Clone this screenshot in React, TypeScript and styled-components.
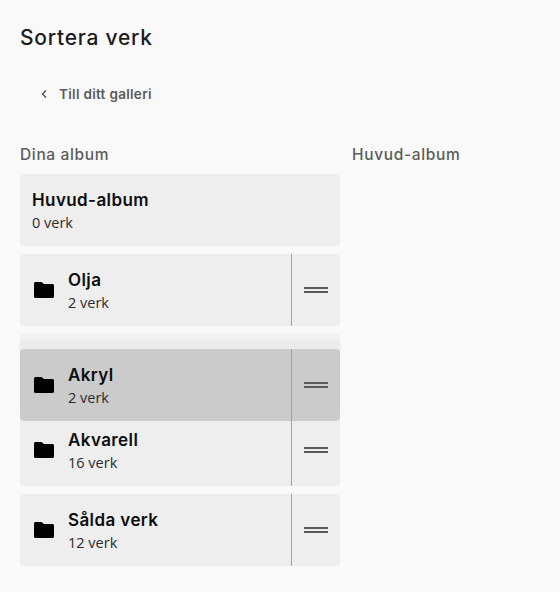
import React from "react";
import styled, { createGlobalStyle } from "styled-components";

const Global = createGlobalStyle`
  html, body { margin: 0; padding: 0; background: #f9f9f9; }
  body { font-family: "Open Sans", sans-serif; }
`;
const Page = styled.div`
  width: 560px; height: 592px; box-sizing: border-box; padding: 25px 20px 0; overflow: hidden;
`;
const Title = styled.h1`
  margin: 0; font: 500 21px/26px Inter, sans-serif; color: #1c1c1c; letter-spacing: 0.75px;
`;
const Back = styled.a`
  display: flex; align-items: center; gap: 11px; margin: 30px 0 0 20px; height: 26px;
  font: 600 13.5px/26px Inter, sans-serif; color: #5a5a5a; letter-spacing: 0.3px;
`;
const Columns = styled.div`
  display: grid; grid-template-columns: 320px 1fr; column-gap: 12px; margin-top: 38px;
`;
const Heading = styled.h2`
  margin: 0 0 9px; font: 500 15.5px/20px Inter, sans-serif; color: #5c5c5c; letter-spacing: 0.65px;
`;
const List = styled.div`
  position: relative; display: flex; flex-direction: column; gap: 8px;
`;
const Card = styled.div`
  display: flex; height: 72px; background: #eeeeee; border-radius: 4px; overflow: hidden;
`;
const Placeholder = styled.div`
  height: 72px; background: #f1f1f1; border-radius: 4px;
`;
const Dragged = styled(Card)`
  position: absolute; left: 0; right: 0; top: 175px; background: #cbcbcb; z-index: 2;
  box-shadow: 0 -7px 0 1px rgba(0, 0, 0, 0.018);
`;
const Body = styled.div`
  flex: 1; display: flex; align-items: center; padding-left: 12px; gap: 12px;
`;
const Texts = styled.div`
  display: flex; flex-direction: column; gap: 2px; margin-top: 1px;
`;
const Name = styled.div`
  font: 600 17px/22px Inter, sans-serif; color: #0d0d0d; letter-spacing: 0.4px;
`;
const Count = styled.div`
  font: 400 14.5px/20px "Open Sans", sans-serif; color: #2c2c2c;
`;
const Handle = styled.div`
  width: 49px; border-left: 1px solid #a3a3a3; display: flex; flex-direction: column;
  align-items: center; justify-content: center; gap: 2px; box-sizing: border-box;
`;
const Bar = styled.span`
  display: block; width: 24px; height: 2px; background: #5b5b5b;
`;

const Folder = () => (
  <svg width="24" height="24" viewBox="0 0 24 24" aria-hidden="true">
    <path fill="#000" d="M9.500 4H3.500C2.700 4 2 4.700 2 5.500v13c0 .8.700 1.500 1.500 1.500h17c.8 0 1.500-.7 1.500-1.500v-11C22 6.700 21.300 6 20.500 6H12L9.500 4z" />
  </svg>
);

const Row = ({ name, count, as: C = Card }: { name: string; count: string; as?: typeof Card }) => (
  <C>
    <Body>
      <Folder />
      <Texts>
        <Name>{name}</Name>
        <Count>{count}</Count>
      </Texts>
    </Body>
    <Handle>
      <Bar />
      <Bar />
    </Handle>
  </C>
);

export default function App() {
  return (
    <Page>
      <Global />
      <Title>Sortera verk</Title>
      <Back>
        <svg width="8" height="10" viewBox="0 0 8 10" aria-hidden="true">
          <path d="M6 1.500 2.500 5 6 8.500" fill="none" stroke="#555" strokeWidth="1.500" />
        </svg>
        Till ditt galleri
      </Back>
      <Columns>
        <div>
          <Heading>Dina album</Heading>
          <List>
            <Card>
              <Body>
                <Texts>
                  <Name>Huvud-album</Name>
                  <Count>0 verk</Count>
                </Texts>
              </Body>
            </Card>
            <Row name="Olja" count="2 verk" />
            <Placeholder />
            <Row name="Akryl" count="2 verk" as={Dragged} />
            <Row name="Akvarell" count="16 verk" />
            <Row name="Sålda verk" count="12 verk" />
          </List>
        </div>
        <div>
          <Heading>Huvud-album</Heading>
        </div>
      </Columns>
    </Page>
  );
}
